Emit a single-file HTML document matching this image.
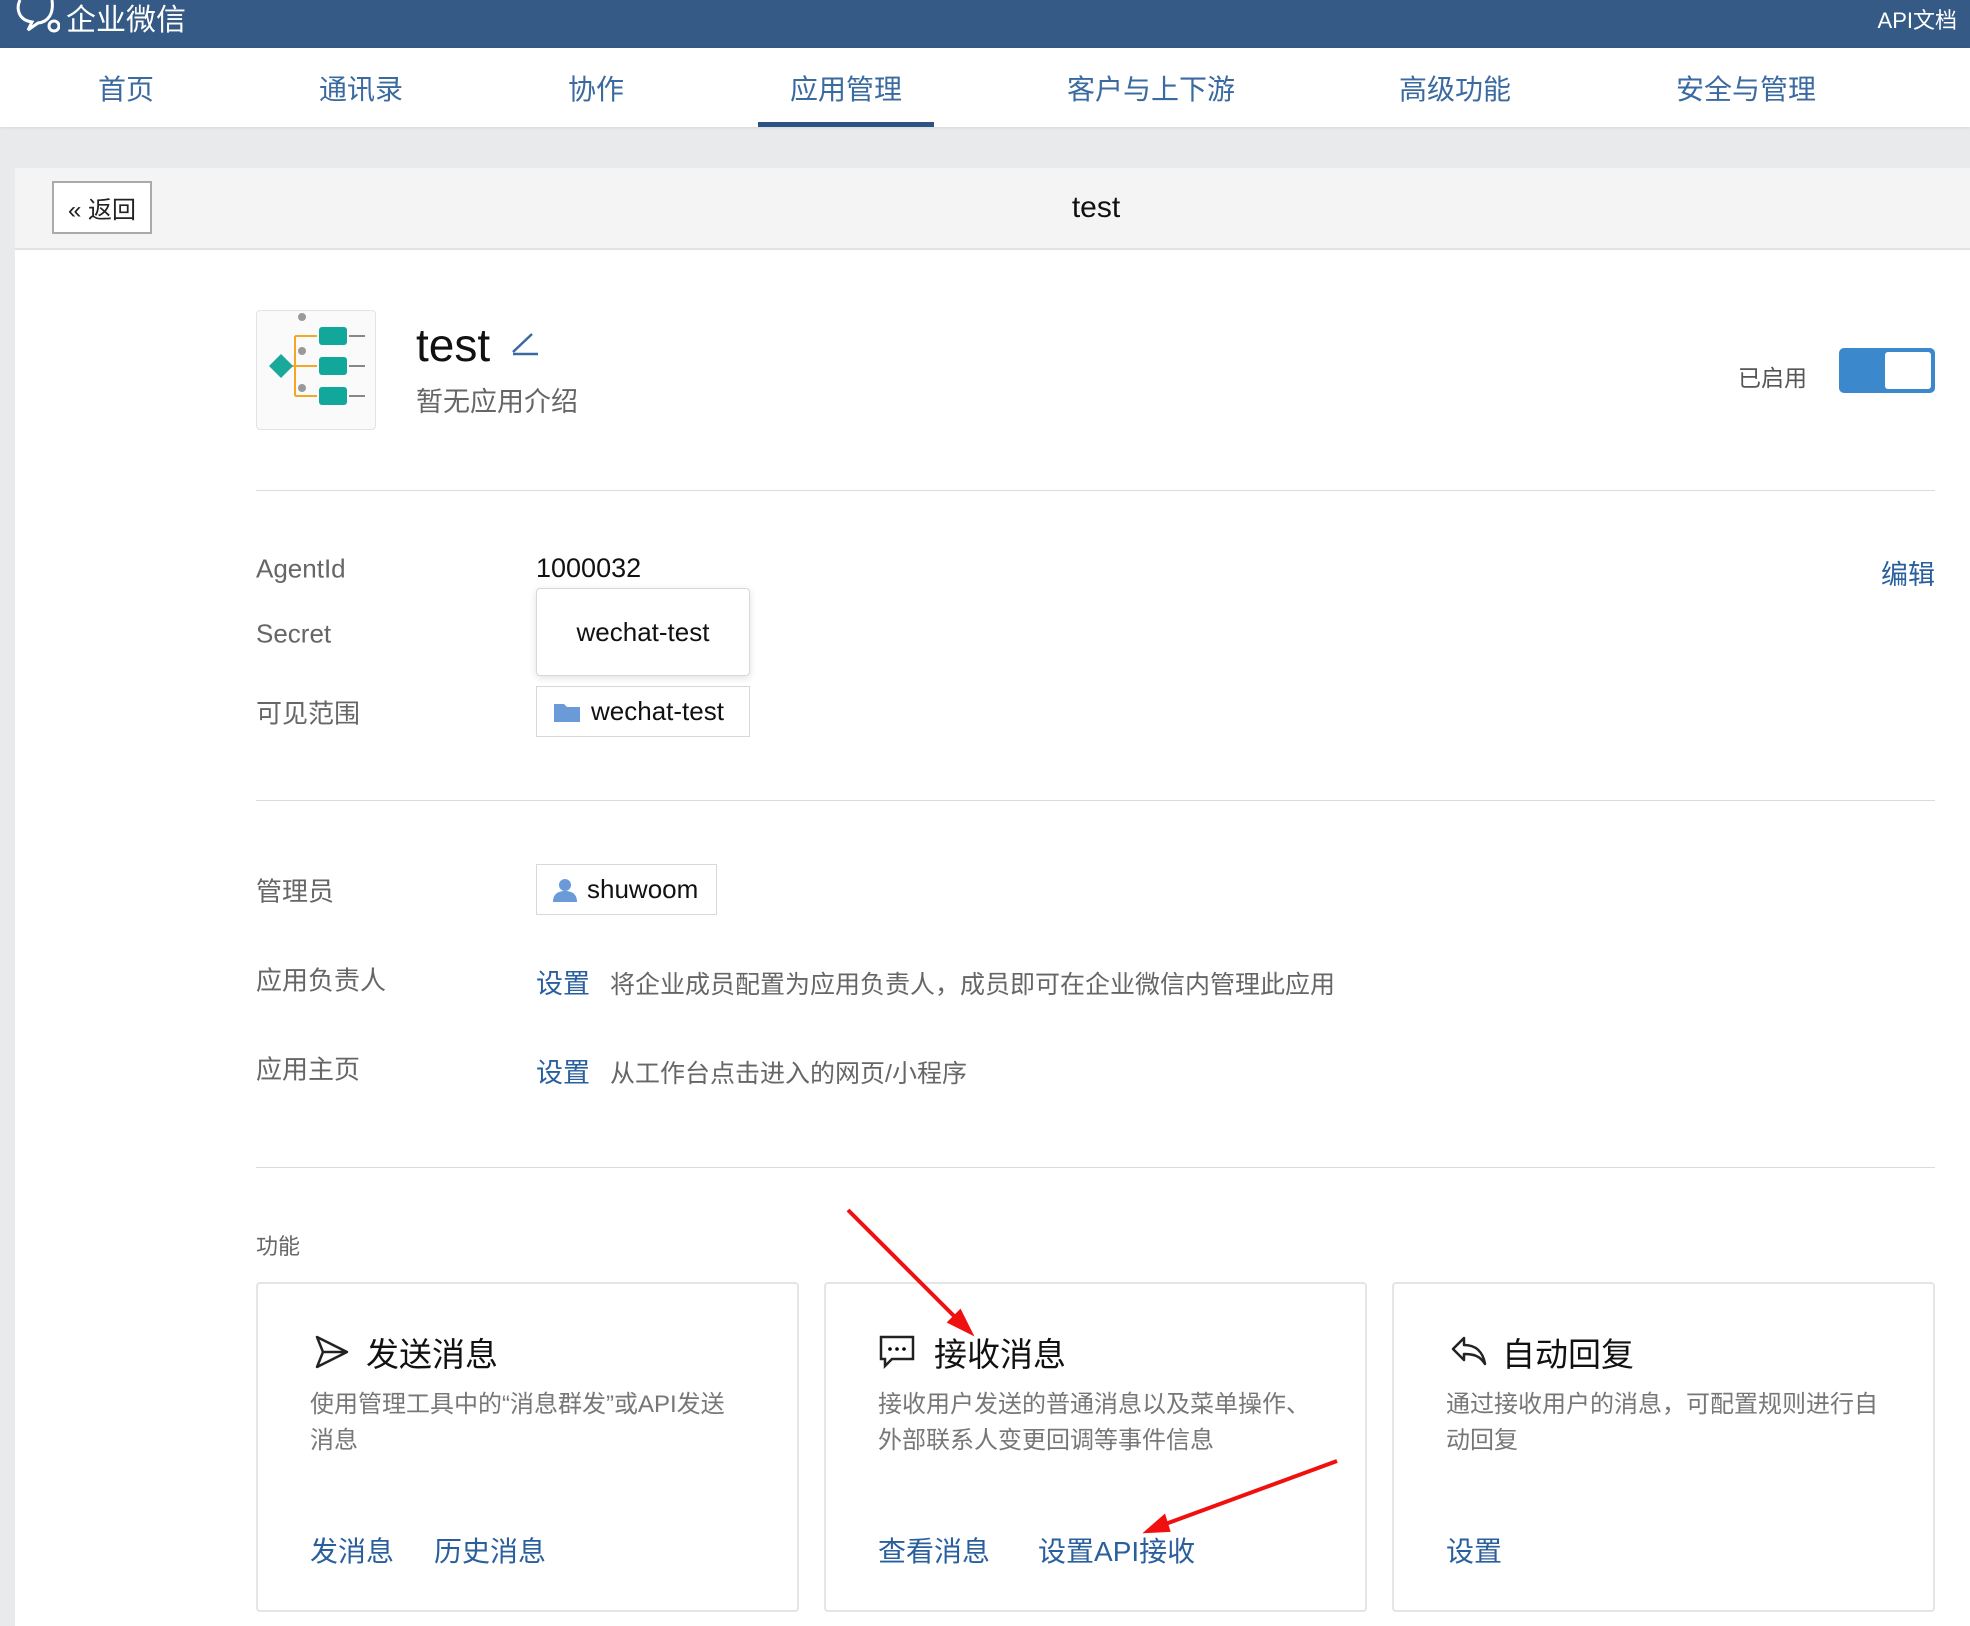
<!DOCTYPE html>
<html><head><meta charset="utf-8"><style>
*{margin:0;padding:0;box-sizing:border-box}
body{width:1970px;height:1626px;overflow:hidden;background:#e9eaec;font-family:"Liberation Sans","Noto Sans CJK SC",sans-serif;position:relative}
.a{position:absolute;white-space:nowrap}
.top{left:0;top:0;width:1970px;height:48px;background:#345a85}
.nav{left:0;top:48px;width:1970px;height:79px;background:#fff;box-shadow:0 1px 3px rgba(0,0,0,.08)}
.ni{top:68px;font-size:28px;color:#3a6aa0;transform:translateX(-50%)}
.card{left:15px;top:168px;width:1955px;height:1458px;background:#fff}
.hd{left:15px;top:168px;width:1955px;height:82px;background:#f4f4f4;border-bottom:2px solid #e0e2e5}
.lbl{font-size:26px;color:#666;transform:translateY(-50%)}
.hr{left:256px;width:1679px;height:1px;background:#dcdcdc}
.tag{border:1px solid #d8d8d8;background:#fff;font-size:26px;color:#111;display:flex;align-items:center}
.link{color:#2a5f9e}
.fc{border:2px solid #e4e5e8;border-radius:4px;background:#fff;top:1282px;width:543px;height:330px}
.ft{font-size:33px;color:#111;top:1328px}
.fd{font-size:24px;color:#777;line-height:36px;top:1387px}
.fl{font-size:28px;color:#2a5f9e;top:1530px}
</style></head><body>
<div class="a top"></div>
<svg class="a" style="left:14px;top:0" width="46" height="36" viewBox="0 0 46 36"><path d="M6 0 C2 8 4 20 18 22 L14 30 L24 23 C34 22 40 14 38 0" fill="none" stroke="#fff" stroke-width="3"/><circle cx="40" cy="26" r="5" fill="none" stroke="#fff" stroke-width="3"/></svg>
<div class="a" style="left:66px;top:-5px;font-size:30px;color:#fff">企业微信</div>
<div class="a" style="right:13px;top:3px;font-size:22px;color:#fff">API文档</div>
<div class="a nav"></div>
<div class="a ni" style="left:126px">首页</div>
<div class="a ni" style="left:361px">通讯录</div>
<div class="a ni" style="left:596px">协作</div>
<div class="a ni" style="left:846px">应用管理</div>
<div class="a ni" style="left:1151px">客户与上下游</div>
<div class="a ni" style="left:1455px">高级功能</div>
<div class="a ni" style="left:1746px">安全与管理</div>
<div class="a" style="left:758px;top:122px;width:176px;height:5px;background:#2c5283"></div>
<div class="a card"></div>
<div class="a hd"></div>
<div class="a" style="left:52px;top:181px;width:100px;height:53px;border:2px solid #aaa;background:#fff;font-size:24px;color:#222;display:flex;align-items:center;justify-content:center">« 返回</div>
<div class="a" style="left:1096px;top:191px;transform:translateX(-50%);font-size:30px;color:#111">test</div>
<div class="a" style="left:256px;top:310px;width:120px;height:120px;border:1px solid #e3e3e3;border-radius:4px;background:#fafafa">
<svg width="118" height="118" viewBox="0 0 118 118"><path d="M28 55 L38 55 M38 25 L38 85 M38 25 L60 25 M38 55 L60 55 M38 85 L60 85" stroke="#f5a623" stroke-width="2" fill="none"/><path d="M14 55 L26 43 L38 55 L26 67Z" fill="#1aa89a" transform="translate(-2,0)"/><rect x="62" y="16" width="28" height="18" rx="3" fill="#12a79b"/><rect x="62" y="46" width="28" height="18" rx="3" fill="#12a79b"/><rect x="62" y="76" width="28" height="18" rx="3" fill="#12a79b"/><path d="M92 25h16M92 55h16M92 85h16" stroke="#888" stroke-width="2"/><circle cx="45" cy="6" r="4" fill="#999"/><circle cx="45" cy="40" r="4" fill="#999"/><circle cx="45" cy="77" r="4" fill="#999"/></svg></div>
<div class="a" style="left:416px;top:318px;font-size:46px;color:#111">test</div>
<svg class="a" style="left:510px;top:330px" width="30" height="26"><path d="M3 22 L22 4 M3 24 H28" stroke="#3a6aa0" stroke-width="2.5" fill="none"/></svg>
<div class="a" style="left:416px;top:380px;font-size:27px;color:#666">暂无应用介绍</div>
<div class="a" style="left:1738px;top:359px;font-size:23px;color:#555">已启用</div>
<div class="a" style="left:1839px;top:348px;width:96px;height:45px;background:#3c88cc;border-radius:5px"><div style="position:absolute;right:4px;top:4px;width:46px;height:37px;background:#fff;border-radius:3px"></div></div>
<div class="a hr" style="top:490px"></div>
<div class="a lbl" style="left:256px;top:569px">AgentId</div>
<div class="a" style="left:536px;top:553px;font-size:27px;color:#111">1000032</div>
<div class="a" style="right:35px;top:553px;font-size:27px;color:#2a5f9e">编辑</div>
<div class="a lbl" style="left:256px;top:634px">Secret</div>
<div class="a tag" style="left:536px;top:588px;width:214px;height:88px;justify-content:center;border-radius:4px;box-shadow:0 2px 8px rgba(0,0,0,.12)">wechat-test</div>
<div class="a lbl" style="left:256px;top:712px">可见范围</div>
<div class="a tag" style="left:536px;top:686px;width:214px;height:51px;padding-left:16px"><svg width="28" height="22" style="margin-right:10px"><path d="M1 3h10l3 3h13v15H1z" fill="#6a9bd8"/></svg>wechat-test</div>
<div class="a hr" style="top:800px"></div>
<div class="a lbl" style="left:256px;top:890px">管理员</div>
<div class="a tag" style="left:536px;top:864px;width:181px;height:51px;padding-left:16px"><svg width="24" height="24" style="margin-right:10px"><circle cx="12" cy="7" r="6" fill="#6a9bd8"/><path d="M0 24c0-8 5-11 12-11s12 3 12 11z" fill="#6a9bd8"/></svg>shuwoom</div>
<div class="a lbl" style="left:256px;top:979px">应用负责人</div>
<div class="a" style="left:536px;top:962px;font-size:27px"><span class="link">设置</span><span style="font-size:25px;color:#666;margin-left:20px">将企业成员配置为应用负责人，成员即可在企业微信内管理此应用</span></div>
<div class="a lbl" style="left:256px;top:1068px">应用主页</div>
<div class="a" style="left:536px;top:1051px;font-size:27px"><span class="link">设置</span><span style="font-size:25px;color:#666;margin-left:20px">从工作台点击进入的网页/小程序</span></div>
<div class="a hr" style="top:1167px"></div>
<div class="a" style="left:256px;top:1229px;font-size:22px;color:#666">功能</div>
<div class="a fc" style="left:256px"></div>
<div class="a fc" style="left:824px"></div>
<div class="a fc" style="left:1392px"></div>
<svg class="a" style="left:314px;top:1334px" width="36" height="36"><path d="M3 3 L33 18 L3 33 L9 18Z M9 18H33" stroke="#222" stroke-width="2.5" fill="none" stroke-linejoin="round"/></svg>
<div class="a ft" style="left:366px">发送消息</div>
<svg class="a" style="left:878px;top:1334px" width="38" height="36"><path d="M3 3h32v22H14l-7 7v-7H3z" stroke="#222" stroke-width="2.5" fill="none"/><circle cx="12" cy="15" r="1.8"/><circle cx="19" cy="15" r="1.8"/><circle cx="26" cy="15" r="1.8"/></svg>
<div class="a ft" style="left:934px">接收消息</div>
<svg class="a" style="left:1450px;top:1334px" width="38" height="34"><path d="M14 4 L3 15 L14 26 V20 C24 20 30 22 35 30 C33 18 26 11 14 11Z" stroke="#222" stroke-width="2.5" fill="none" stroke-linejoin="round"/></svg>
<div class="a ft" style="left:1502px">自动回复</div>
<div class="a fd" style="left:310px">使用管理工具中的“消息群发”或API发送<br>消息</div>
<div class="a fd" style="left:878px">接收用户发送的普通消息以及菜单操作、<br>外部联系人变更回调等事件信息</div>
<div class="a fd" style="left:1446px">通过接收用户的消息，可配置规则进行自<br>动回复</div>
<div class="a fl" style="left:310px">发消息<span style="margin-left:40px">历史消息</span></div>
<div class="a fl" style="left:878px">查看消息<span style="margin-left:48px">设置API接收</span></div>
<div class="a fl" style="left:1446px">设置</div>
<svg class="a" style="left:0;top:0" width="1970" height="1626"><g stroke="#f01010" stroke-width="4" fill="#f01010"><line x1="848" y1="1210" x2="960" y2="1322"/><path d="M970 1332 L950 1322 L960 1312Z"/><line x1="1337" y1="1461" x2="1160" y2="1526"/><path d="M1148 1531 L1164 1517 L1168 1530Z"/></g></svg>
</body></html>
